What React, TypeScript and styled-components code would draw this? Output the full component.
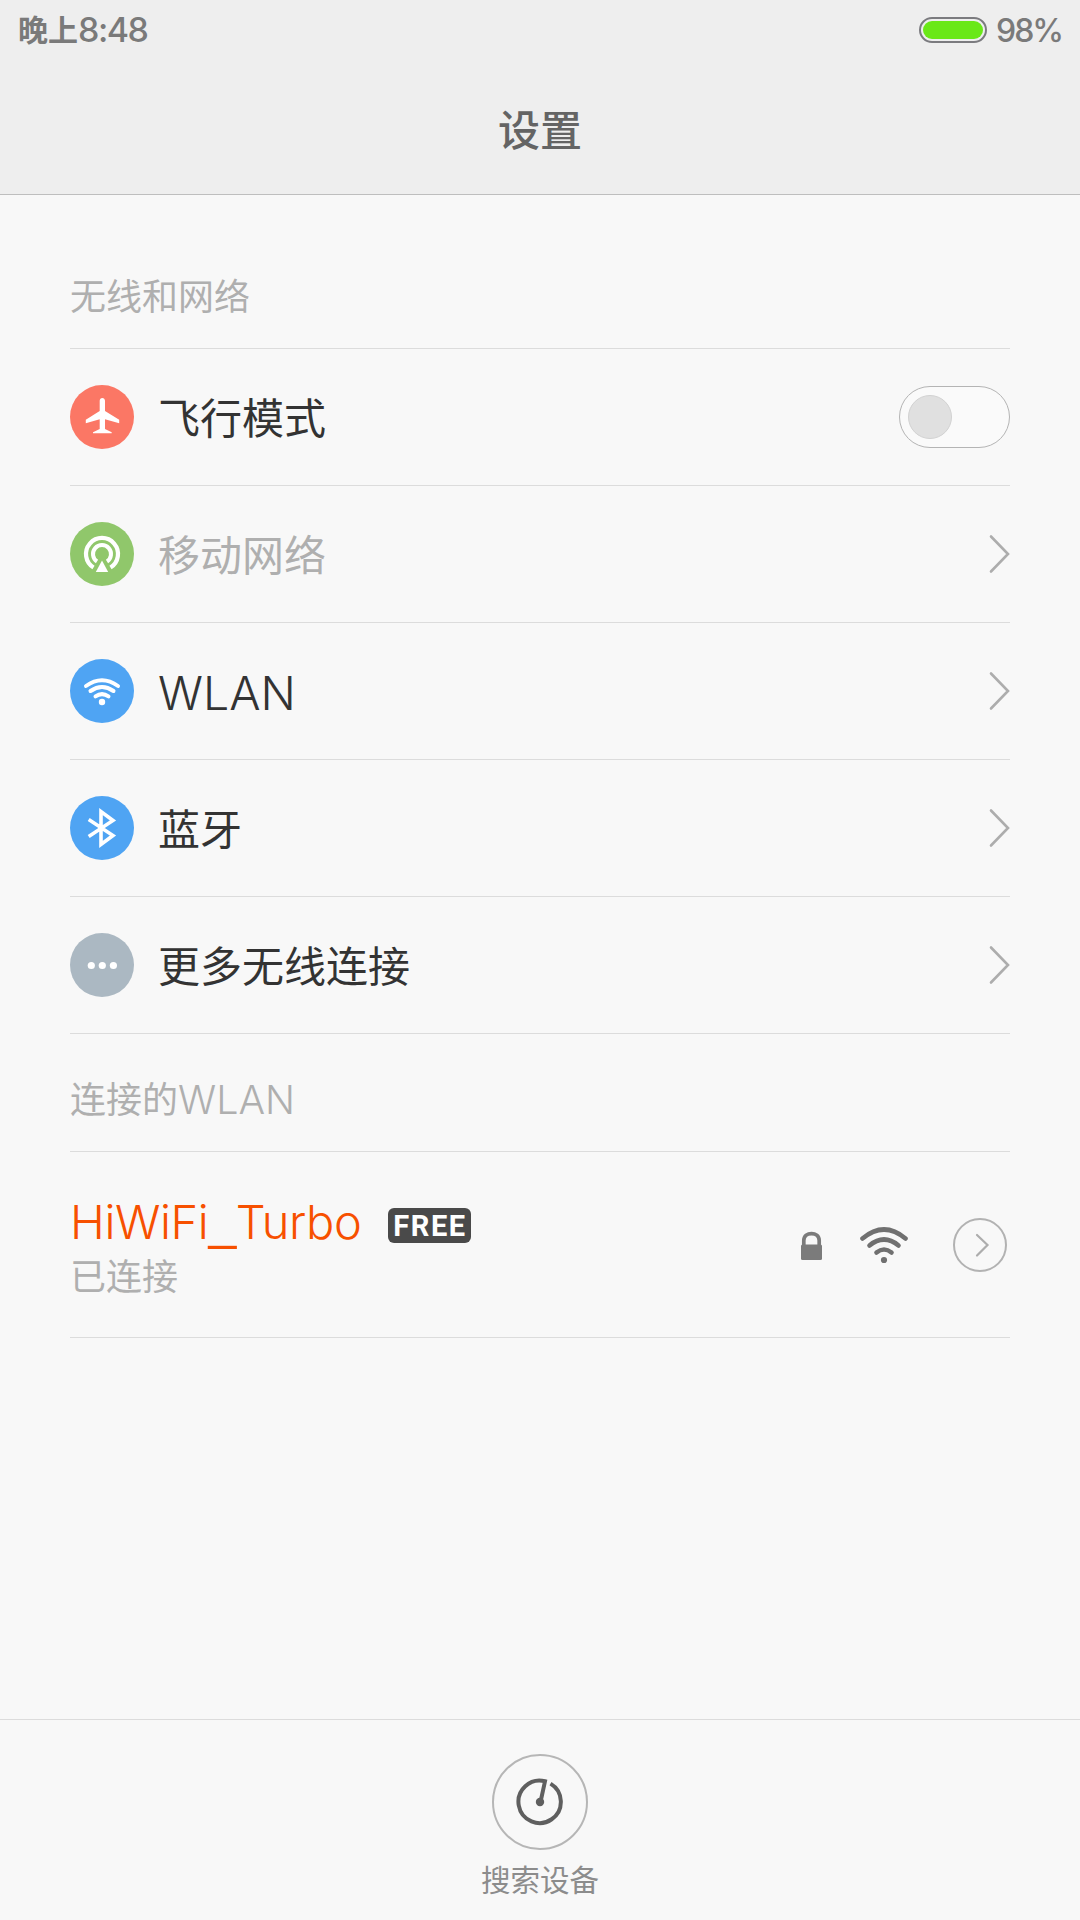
import React from "react";
import styled, { createGlobalStyle } from "styled-components";

const GlobalStyle = createGlobalStyle`
  * { box-sizing: border-box; }
  body {
    margin: 0;
    background: #f8f8f8;
    font-family: Inter, "Noto Sans CJK SC", sans-serif;
  }
`;

const Screen = styled.div`
  display: flex;
  flex-direction: column;
  width: 1080px;
  height: 1920px;
  background: #f8f8f8;
  overflow: hidden;
`;

const Header = styled.header`
  display: flex;
  flex-direction: column;
  height: 195px;
  background: #eeeeee;
  border-bottom: 1px solid #bebebe;
`;

const StatusBar = styled.div`
  display: flex;
  justify-content: space-between;
  align-items: center;
  height: 60px;
  padding: 0 18px;
  color: #7a7a7a;
`;

const Clock = styled.div`
  display: flex;
  align-items: center;
  line-height: 40px;
`;

const ClockPeriod = styled.span`
  font-size: 30px;
  font-weight: 700;
`;

const ClockTime = styled.span`
  font-size: 34px;
  font-weight: 500;
  letter-spacing: -1.5px;
`;

const PowerStatus = styled.div`
  display: flex;
  align-items: center;
  gap: 9px;
`;

const Percent = styled.span`
  width: 66px;
  font-size: 32px;
  font-weight: 500;
  line-height: 40px;
  letter-spacing: -2px;
  margin-top: 2px;
`;

const Battery = styled.div`
  width: 68px;
  height: 26px;
  padding: 2px;
  border: 2px solid #7b7b7f;
  border-radius: 13px;
`;

const BatteryLevel = styled.div`
  width: 100%;
  height: 100%;
  border-radius: 9px;
  background: #6ae817;
`;

const Title = styled.h1`
  margin: 41px 0 0;
  color: #646464;
  font-size: 42px;
  font-weight: 500;
  line-height: 60px;
  text-align: center;
`;

const Content = styled.main`
  flex: 1;
  padding: 0 70px;
`;

const SectionTitle = styled.h2<{ $top: number }>`
  display: flex;
  align-items: center;
  height: ${(p) => p.$top + 77}px;
  margin: 0;
  padding: ${(p) => p.$top}px 0 26px;
  border-bottom: 1px solid #dcdcdc;
  color: #afafaf;
  font-size: 36px;
  font-weight: 400;
  line-height: 50px;
`;

const Latin = styled.span<{ $size: number; $spacing?: number }>`
  font-size: ${(p) => p.$size}px;
  font-weight: 340;
  letter-spacing: ${(p) => p.$spacing ?? 0}px;
`;

const Row = styled.div`
  display: flex;
  align-items: center;
  height: 137px;
  border-bottom: 1px solid #dcdcdc;
`;

const IconDisc = styled.div<{ $color: string }>`
  width: 64px;
  height: 64px;
  border-radius: 50%;
  background: ${(p) => p.$color};

  svg { display: block; }
`;

const RowLabel = styled.div<{ $muted?: boolean }>`
  display: flex;
  align-items: center;
  flex: 1;
  margin-left: 24px;
  padding-top: 3px;
  color: ${(p) => (p.$muted ? "#afafaf" : "#333333")};
  font-size: 42px;
  line-height: 60px;
`;

const Toggle = styled.div`
  width: 111px;
  height: 62px;
  padding: 8px;
  border: 1px solid #b4b4b4;
  border-radius: 31px;
  background: #fafafa;
`;

const Thumb = styled.div`
  width: 44px;
  height: 44px;
  border: 1px solid #d2d2d2;
  border-radius: 50%;
  background: #e0e0e0;
`;

const NetworkRow = styled.div`
  display: flex;
  align-items: center;
  height: 186px;
  border-bottom: 1px solid #dcdcdc;
`;

const NetworkInfo = styled.div`
  flex: 1;
  padding-top: 6px;
`;

const NetworkName = styled.div`
  display: flex;
  align-items: center;
  height: 56px;
  color: #f75000;
`;

const NameText = styled.div`
  width: 318px;
  padding-top: 13px;
  line-height: 56px;
  white-space: nowrap;
`;

const Underscore = styled.span`
  font-family: "Liberation Sans", Arial, sans-serif;
  font-size: 50px;
  line-height: 1;
`;

const Badge = styled.span`
  display: flex;
  justify-content: center;
  width: 83px;
  height: 35px;
  margin-top: 9px;
  padding-left: 1px;
  border-radius: 6px;
  background: #4a4a4a;
  color: #ffffff;
  font-family: Roboto, sans-serif;
  font-size: 29px;
  font-weight: 700;
  line-height: 36px;
  letter-spacing: 1.6px;
`;

const NetworkState = styled.div`
  margin-top: 3px;
  color: #afafaf;
  font-size: 36px;
  line-height: 50px;
`;

const NetworkIcons = styled.div`
  display: flex;
  align-items: center;
  padding-right: 3px;

  svg { display: block; }
`;

const SignalSlot = styled.div`
  margin-left: 38px;
`;

const DetailButton = styled.div`
  width: 54px;
  height: 54px;
  margin-left: 45px;
  border: 2px solid #b2b2b2;
  border-radius: 50%;
`;

const Footer = styled.footer`
  display: flex;
  flex-direction: column;
  align-items: center;
  height: 201px;
  padding-top: 34px;
  border-top: 1px solid #dcdcdc;
`;

const ScanButton = styled.div`
  width: 96px;
  height: 96px;
  border: 2px solid #b6b6b6;
  border-radius: 50%;
`;

const ScanLabel = styled.div`
  margin-top: 9px;
  color: #8c8c8c;
  font-size: 29.5px;
  line-height: 42px;
`;

const Chevron = () => (
  <svg width="23" height="42" viewBox="0 0 23 42" fill="none" stroke="#adadad" strokeWidth="2.6" strokeLinecap="round" strokeLinejoin="miter">
    <path d="M4 3.5 21 21 4 38.5" />
  </svg>
);

const PlaneIcon = () => (
  <svg width="64" height="64" viewBox="0 0 64 64" fill="#fff">
    <path d="M32.300 13c1.500 0 2.700 1.200 2.700 2.800V26L49.200 34.700V38.200L35 34.300V44L41.700 47.200V48.200H23V47.200L29.700 44V34.300L15.800 38.200V34.700L29.700 26V15.800C29.700 14.200 30.800 13 32.300 13Z" />
  </svg>
);

const MobileIcon = () => (
  <svg width="64" height="64" viewBox="0 0 64 64" fill="none" stroke="#fff">
    <path d="M23.500 45.500A16 16 0 1 1 40.500 45.500" strokeWidth="4.200" />
    <path d="M27 39.500A9 9 0 1 1 37 39.500" strokeWidth="4" />
    <path d="M32 38.500 38.200 50H25.800Z" fill="#fff" stroke="none" />
  </svg>
);

const WlanIcon = () => (
  <svg width="64" height="64" viewBox="0 0 64 64" fill="none" stroke="#fff" strokeWidth="4" strokeLinecap="round">
    <path d="M16 27Q32 15.500 48 27" />
    <path d="M20.500 32Q32 24 43.500 32" />
    <path d="M25.500 37.300Q32 33 38.500 37.300" />
    <circle cx="32" cy="43" r="3.200" fill="#fff" stroke="none" />
  </svg>
);

const BluetoothIcon = () => (
  <svg width="64" height="64" viewBox="0 0 64 64" fill="none" stroke="#fff" strokeWidth="3.600" strokeLinejoin="miter">
    <path d="M18.700 23.500 43 39.500 31 48.500V15.500L43 24.500 18.700 40.500" />
  </svg>
);

const MoreIcon = () => (
  <svg width="64" height="64" viewBox="0 0 64 64" fill="#fff">
    <circle cx="21.300" cy="32.500" r="3.600" />
    <circle cx="32.300" cy="32.500" r="3.600" />
    <circle cx="43.400" cy="32.500" r="3.600" />
  </svg>
);

const LockIcon = () => (
  <svg width="21" height="32" viewBox="0 0 21 32">
    <path d="M2.800 16V11.500C2.800 2.200 18.200 2.200 18.200 11.500V16" fill="none" stroke="#7b7b7b" strokeWidth="3.700" />
    <rect y="15.500" width="21" height="15.500" rx="1.500" fill="#7b7b7b" />
  </svg>
);

const SignalIcon = () => (
  <svg width="48" height="38" viewBox="0 0 48 38" fill="none" stroke="#707070" strokeWidth="4.600" strokeLinecap="round">
    <path d="M2.500 12.500Q24 -5.500 45.500 12.500" />
    <path d="M9.500 19.500Q24 7.500 38.500 19.500" />
    <path d="M16.500 26.500Q24 20.500 31.500 26.500" />
    <circle cx="24" cy="34" r="3.100" fill="#707070" stroke="none" />
  </svg>
);

const settings = [
  { label: "飞行模式", color: "#fb7765", icon: <PlaneIcon />, toggle: true },
  { label: "移动网络", color: "#90c76b", icon: <MobileIcon />, muted: true },
  { label: "WLAN", color: "#4fa4f3", icon: <WlanIcon />, latin: true },
  { label: "蓝牙", color: "#4fa4f3", icon: <BluetoothIcon /> },
  { label: "更多无线连接", color: "#abb8c2", icon: <MoreIcon /> },
];

export default function App() {
  return (
    <Screen>
      <GlobalStyle />
      <Header>
        <StatusBar>
          <Clock>
            <ClockPeriod>晚上</ClockPeriod>
            <ClockTime>8:48</ClockTime>
          </Clock>
          <PowerStatus>
            <Battery>
              <BatteryLevel />
            </Battery>
            <Percent>98%</Percent>
          </PowerStatus>
        </StatusBar>
        <Title>设置</Title>
      </Header>
      <Content>
        <SectionTitle $top={77}>无线和网络</SectionTitle>
        {settings.map((s) => (
          <Row key={s.label}>
            <IconDisc $color={s.color}>{s.icon}</IconDisc>
            <RowLabel $muted={s.muted}>
              {s.latin ? <Latin $size={46.5}>{s.label}</Latin> : s.label}
            </RowLabel>
            {s.toggle ? (
              <Toggle>
                <Thumb />
              </Toggle>
            ) : (
              <Chevron />
            )}
          </Row>
        ))}
        <SectionTitle $top={41}>
          连接的<Latin $size={39.5}>WLAN</Latin>
        </SectionTitle>
        <NetworkRow>
          <NetworkInfo>
            <NetworkName>
              <NameText>
                <Latin $size={47} $spacing={-0.4}>
                  HiWiFi<Underscore>_</Underscore>Turbo
                </Latin>
              </NameText>
              <Badge>FREE</Badge>
            </NetworkName>
            <NetworkState>已连接</NetworkState>
          </NetworkInfo>
          <NetworkIcons>
            <LockIcon />
            <SignalSlot>
              <SignalIcon />
            </SignalSlot>
            <DetailButton>
              <svg width="50" height="50" viewBox="0 0 50 50" fill="none" stroke="#adadad" strokeWidth="2.200" strokeLinecap="round">
                <path d="M22 15 32.500 25 22 35.500" />
              </svg>
            </DetailButton>
          </NetworkIcons>
        </NetworkRow>
      </Content>
      <Footer>
        <ScanButton>
          <svg width="92" height="92" viewBox="0 0 92 92" fill="none" stroke="#5f5f5f" strokeWidth="4">
            <path d="M46.500 46 51 25.300A21.200 21.200 0 1 0 56.500 27.600" />
            <circle cx="46" cy="46" r="4.200" fill="#5f5f5f" stroke="none" />
          </svg>
        </ScanButton>
        <ScanLabel>搜索设备</ScanLabel>
      </Footer>
    </Screen>
  );
}
